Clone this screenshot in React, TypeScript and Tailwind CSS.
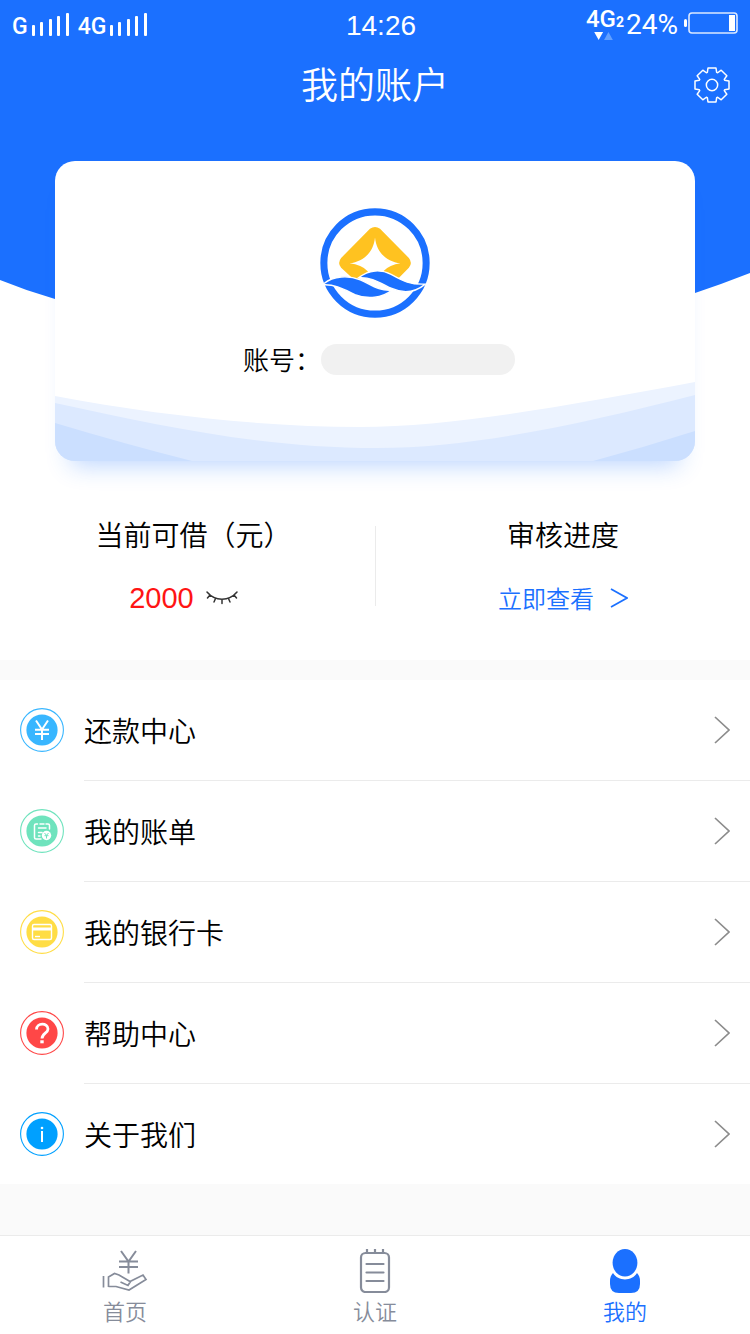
import type { ReactNode } from "react";

function SignalBars() {
  return (
    <svg viewBox="0 0 38 24" className="h-6 w-[38px]" fill="currentColor" aria-hidden="true">
      <rect x="0" y="12" width="3" height="11" rx="1" />
      <rect x="8" y="9" width="3" height="14" rx="1" />
      <rect x="17" y="6" width="3" height="17" rx="1" />
      <rect x="25" y="3" width="3" height="20" rx="1" />
      <rect x="34" y="0" width="3" height="23" rx="1" />
    </svg>
  );
}

function StatusBar() {
  return (
    <div className="grid h-[50px] grid-cols-3 items-center px-3 text-white">
      <div className="flex items-center pt-1 font-['Roboto',sans-serif] text-[23px] font-medium">
        <span>G</span>
        <span className="pb-1 pl-1">
          <SignalBars />
        </span>
        <span className="pl-2">4G</span>
        <span className="pb-1 pl-1">
          <SignalBars />
        </span>
      </div>
      <div className="pt-0.5 pl-3 text-center font-['Liberation_Sans',sans-serif] text-[28px] font-normal">14:26</div>
      <div className="flex items-center justify-end">
        <div className="flex flex-col pb-1 font-['Roboto',sans-serif] font-medium">
          <span className="text-2xl leading-6">
            4G<span className="text-sm font-bold">2</span>
          </span>
          <svg viewBox="0 0 36 9" className="h-2 w-9" aria-hidden="true">
            <path d="M7 0h10l-5 9z" fill="#fff" />
            <path d="M18 9h10l-5-9z" fill="#62a0ff" />
          </svg>
        </div>
        <span className="pl-0.5 font-['Roboto',sans-serif] text-[28px] font-normal">24%</span>
        <svg viewBox="0 0 56 24" className="mb-1 ml-1 h-6 w-14" aria-hidden="true">
          <rect x="2" y="8" width="3" height="8" rx="1.5" fill="#fff" />
          <rect x="7" y="2" width="48" height="20" rx="3" fill="none" stroke="#dbe8ff" strokeWidth="1.600" />
          <rect x="47" y="4" width="6" height="16" fill="#fff" />
        </svg>
      </div>
    </div>
  );
}

function GearIcon() {
  return (
    <svg viewBox="-54 -54 108 108" className="size-9" fill="none" stroke="#fff" strokeWidth="4.5" strokeLinejoin="round" aria-hidden="true">
      <path d="M-14-38L-12-51H12L14-38L17-36.8L27.6-44.5L44.5-27.6L36.8-17L38-14L51-12V12L38 14L36.8 17L44.5 27.6L27.6 44.5L17 36.8L14 38L12 51H-12L-14 38L-17 36.8L-27.6 44.5L-44.5 27.6L-36.8 17L-38 14L-51 12V-12L-38-14L-36.8-17L-44.5-27.6L-27.6-44.5L-17-36.8Z" />
      <circle r="17" />
    </svg>
  );
}

function Logo() {
  return (
    <svg viewBox="60 38 328 328" className="size-[110px]" role="img" aria-label="logo">
      <circle cx="224" cy="202" r="152.5" fill="none" stroke="#1b70ff" strokeWidth="21" />
      <path
        d="M209 100Q224 89 239 100L325 187Q337 202 325 216L292 250L248 227Q268 207 300 203C258 198 228 170 224 126C220 170 190 198 148 203Q184 207 203 227L172 252L162 252L123 216Q111 202 123 187Z"
        fill="#ffc220"
      />
      <path
        d="M72 263C100 240 145 238 180 252C212 266 235 286 274 283C244 306 204 312 164 296C130 280 105 266 72 267Z"
        fill="#1b70ff"
        stroke="#fff"
        strokeWidth="4"
      />
      <path
        d="M175 246C205 222 242 220 272 236C308 256 330 267 374 265C346 288 310 294 274 278C240 262 214 243 175 246Z"
        fill="#1b70ff"
        stroke="#fff"
        strokeWidth="4"
      />
    </svg>
  );
}

function CardWaves() {
  return (
    <svg viewBox="0 220 640 80" preserveAspectRatio="none" className="absolute inset-x-0 bottom-0 h-20 w-full" aria-hidden="true">
      <path d="M0 235C100 254 210 266 305 266C400 266 520 243 640 221V300H0Z" fill="#ecf3ff" />
      <path d="M0 242C110 266 210 287 322 287C420 287 530 262 640 234V300H0Z" fill="#dce9ff" />
      <path d="M0 262Q70 283 137 300H0ZM640 270Q590 286 538 300H640Z" fill="#cbdfff" />
    </svg>
  );
}

function EyeClosed() {
  return (
    <svg viewBox="0 0 32 14" className="h-[14px] w-8" fill="none" stroke="#333" strokeWidth="1.5" strokeLinecap="round" aria-hidden="true">
      <path d="M1 1C9 10.500 23 10.500 31 1M4 4L1.500 7M9.500 7.500L8 11M16 8.500V12.500M22.500 7.500L24 11M28 4L30.500 7" />
    </svg>
  );
}

function Badge({ color, children }: { color: string; children: ReactNode }) {
  return (
    <svg viewBox="0 0 44 44" className="mb-px size-11 shrink-0" aria-hidden="true">
      <circle cx="22" cy="22" r="21.400" fill="none" stroke={color} strokeWidth="1.100" />
      <circle cx="22" cy="22" r="15.600" fill={color} />
      {children}
    </svg>
  );
}

const rows: { label: string; icon: ReactNode }[] = [
  {
    label: "还款中心",
    icon: (
      <Badge color="#38b6ff">
        <path d="M16 12.500L22 21.500L28 12.500M22 21.500V32M15 21.800H29M15 26H29" fill="none" stroke="#fff" strokeWidth="2" />
      </Badge>
    ),
  },
  {
    label: "我的账单",
    icon: (
      <Badge color="#6fe3bd">
        <g fill="none" stroke="#fff" strokeWidth="1.500" strokeLinecap="round">
          <path d="M17.500 15H16Q14.500 15 14.500 16.500V28.500Q14.500 30 16 30H21M26 15H28Q29.500 15 29.500 16.500V20M20 15H24M18.500 19H26M18.500 23.500H22M18.500 27H20" />
        </g>
        <circle cx="26.500" cy="26.500" r="4.700" fill="#fff" />
        <path d="M24.500 24L26.500 26.300L28.500 24M26.500 26.300V29.500M24.500 26.700H28.500" fill="none" stroke="#6fe3bd" />
      </Badge>
    ),
  },
  {
    label: "我的银行卡",
    icon: (
      <Badge color="#ffdd45">
        <rect x="12.500" y="14.500" width="19" height="15" rx="1.500" fill="none" stroke="#fff" strokeWidth="1.400" />
        <path d="M12.500 19H31.500" stroke="#fff" strokeWidth="3" />
        <path d="M15 26.500H20" stroke="#fff" strokeWidth="1.400" />
      </Badge>
    ),
  },
  {
    label: "帮助中心",
    icon: (
      <Badge color="#ff4747">
        <path d="M16.500 18.500C16.500 11.500 28 11.500 28 18C28 22 22 22.500 22 27.500" fill="none" stroke="#fff" strokeWidth="2.800" />
        <rect x="20.300" y="29.300" width="3.400" height="3" fill="#fff" />
      </Badge>
    ),
  },
  {
    label: "关于我们",
    icon: (
      <Badge color="#00a0ff">
        <path d="M22 19V30" stroke="#fff" strokeWidth="2" />
        <circle cx="22" cy="16" r="1.300" fill="#fff" />
      </Badge>
    ),
  },
];

function HomeIcon() {
  return (
    <svg viewBox="0 0 46 44" className="h-11 w-[46px]" fill="none" stroke="#868c9a" strokeWidth="1.700" aria-hidden="true">
      <path d="M19 2L26.500 12.500L34 2M26.500 12V24.500M17 12.500H36M17 18H36" strokeWidth="2" />
      <path d="M1.500 27V38.500M6.500 38V28L12.500 24.500L17 26L28 32.500L41 26L44 30.500L27 41L14 37.500H6.500M18.500 33L26 36.500L28.500 32.500" />
    </svg>
  );
}

function NotepadIcon() {
  return (
    <svg viewBox="0 0 32 44" className="h-11 w-8" fill="none" stroke="#868c9a" strokeWidth="2.200" aria-hidden="true">
      <rect x="2" y="4" width="28" height="39" rx="4.500" />
      <path d="M8 0V4M16 0V4M24 0V4" />
      <path d="M7.500 15H24.500M7.500 23.500H24.500M7.500 32H24.500" strokeLinecap="round" />
    </svg>
  );
}

function PersonIcon() {
  return (
    <svg viewBox="0 0 30 44" className="h-11 w-[30px]" fill="#1b70ff" aria-hidden="true">
      <ellipse cx="15" cy="13.700" rx="12.400" ry="13.700" />
      <path d="M3 24C8 32.500 22 32.500 27 24Q30 27 30 32V35Q30 44 21 44H9Q0 44 0 35V32Q0 27 3 24Z" />
    </svg>
  );
}

const tabs = [
  { label: "首页", icon: <HomeIcon />, active: false },
  { label: "认证", icon: <NotepadIcon />, active: false },
  { label: "我的", icon: <PersonIcon />, active: true },
];

export default function App() {
  return (
    <div className="flex min-h-screen flex-col bg-[#fafafa] font-['Noto_Sans_CJK_SC',sans-serif] font-[350] text-black">
      <div className="relative isolate bg-white">
        <svg viewBox="0 0 750 340" preserveAspectRatio="none" className="absolute inset-x-0 top-0 -z-10 h-[340px] w-full" aria-hidden="true">
          <path d="M0 0H750V273Q722 284 695 293C560 348 220 350 55 299Q27 291 0 280Z" fill="#1b70ff" />
        </svg>

        <StatusBar />

        <header className="grid h-[70px] grid-cols-[60px_1fr_60px] items-center px-4 text-white">
          <h1 className="col-start-2 pb-0.5 text-center text-[37px]">我的账户</h1>
          <button type="button" aria-label="设置" className="justify-self-end pr-1">
            <GearIcon />
          </button>
        </header>

        <section className="relative isolate mx-[55px] mt-[41px] flex h-[300px] flex-col items-center overflow-hidden rounded-[20px] bg-white pt-[47px] shadow-[0_20px_24px_-16px_rgba(27,111,255,0.3)]">
          <CardWaves />
          <Logo />
          <div className="relative mt-[23px] flex items-center pl-2 text-[26px] leading-9">
            <span>账号：</span>
            <span className="h-[31px] w-[194px] rounded-full bg-[#f1f1f1]" />
          </div>
        </section>

        <section className="grid h-[199px] grid-cols-2 pt-[53px]">
          <div className="flex flex-col items-center gap-6">
            <h2 className="pl-3 text-[28px] leading-10">当前可借（元）</h2>
            <div className="flex items-center gap-3 pr-2">
              <span className="font-['Liberation_Sans',sans-serif] text-[29px] leading-10 font-normal text-[#ff1414]">2000</span>
              <button type="button" aria-label="隐藏金额">
                <EyeClosed />
              </button>
            </div>
          </div>
          <div className="flex">
            <div className="mt-3 h-20 w-px bg-[#ebebeb]" />
            <div className="flex flex-1 flex-col items-center gap-6">
              <h2 className="text-[28px] leading-10">审核进度</h2>
              <a href="#progress" className="flex items-center gap-4 text-2xl leading-10 text-[#1b70ff]">
                立即查看
                <svg viewBox="0 0 18 20" className="h-5 w-[18px]" fill="none" stroke="#1b70ff" strokeWidth="1.700" aria-hidden="true">
                  <path d="M1 1L17 10L1 19" />
                </svg>
              </a>
            </div>
          </div>
        </section>
      </div>

      <ul className="mt-5 bg-white">
        {rows.map((row, i) => (
          <li key={row.label}>
            <a href="#menu" className="flex items-center gap-5 pl-5">
              {row.icon}
              <span className={`flex flex-1 items-center justify-between pr-5 text-[28px] ${i < rows.length - 1 ? "h-[101px] border-b border-[#ebebeb]" : "h-[100px]"}`}>
                {row.label}
                <svg viewBox="0 0 16 28" className="h-7 w-4" fill="none" stroke="#8c8c8c" strokeWidth="1.700" aria-hidden="true">
                  <path d="M1 1L15 14L1 27" />
                </svg>
              </span>
            </a>
          </li>
        ))}
      </ul>

      <nav className="mt-auto grid grid-cols-3 border-t border-[#ebebeb] bg-white pt-[13px] pb-2">
        {tabs.map((tab) => (
          <a
            key={tab.label}
            href="#tab"
            aria-current={tab.active ? "page" : undefined}
            className={`flex flex-col items-center gap-px text-[22px] leading-8 ${tab.active ? "text-[#1b70ff]" : "text-[#868c9a]"}`}
          >
            {tab.icon}
            {tab.label}
          </a>
        ))}
      </nav>
    </div>
  );
}
